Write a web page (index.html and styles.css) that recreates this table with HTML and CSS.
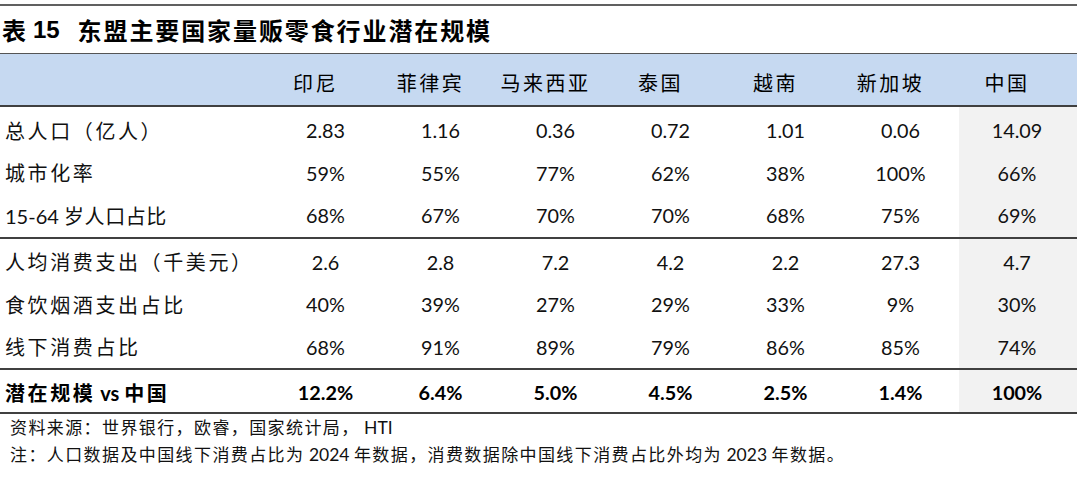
FILE: index.html
```html
<!DOCTYPE html>
<html lang="zh-CN">
<head>
<meta charset="utf-8">
<title>表 15 东盟主要国家量贩零食行业潜在规模</title>
<link rel="stylesheet" href="styles.css">
</head>
<body>
<div class="page">
  <div class="top-rule"></div>
  <h1 class="title"><span class="t-cjk">表</span><span class="t-num">15</span><span class="t-cjk">东盟主要国家量贩零食行业潜在规模</span></h1>

  <div class="table">
    <div class="row head">
      <div class="label"></div>
      <div class="cell">印尼</div>
      <div class="cell">菲律宾</div>
      <div class="cell">马来西亚</div>
      <div class="cell">泰国</div>
      <div class="cell">越南</div>
      <div class="cell">新加坡</div>
      <div class="cell">中国</div>
    </div>

    <div class="group">
      <div class="row">
        <div class="label">总人口（亿人）</div>
        <div class="cell">2.83</div><div class="cell">1.16</div><div class="cell">0.36</div><div class="cell">0.72</div><div class="cell">1.01</div><div class="cell">0.06</div><div class="cell">14.09</div>
      </div>
      <div class="row">
        <div class="label">城市化率</div>
        <div class="cell">59%</div><div class="cell">55%</div><div class="cell">77%</div><div class="cell">62%</div><div class="cell">38%</div><div class="cell">100%</div><div class="cell">66%</div>
      </div>
      <div class="row">
        <div class="label tight"><span class="lat">15-64 </span>岁人口占比</div>
        <div class="cell">68%</div><div class="cell">67%</div><div class="cell">70%</div><div class="cell">70%</div><div class="cell">68%</div><div class="cell">75%</div><div class="cell">69%</div>
      </div>
    </div>

    <div class="group">
      <div class="row">
        <div class="label">人均消费支出（千美元）</div>
        <div class="cell">2.6</div><div class="cell">2.8</div><div class="cell">7.2</div><div class="cell">4.2</div><div class="cell">2.2</div><div class="cell">27.3</div><div class="cell">4.7</div>
      </div>
      <div class="row">
        <div class="label">食饮烟酒支出占比</div>
        <div class="cell">40%</div><div class="cell">39%</div><div class="cell">27%</div><div class="cell">29%</div><div class="cell">33%</div><div class="cell">9%</div><div class="cell">30%</div>
      </div>
      <div class="row">
        <div class="label">线下消费占比</div>
        <div class="cell">68%</div><div class="cell">91%</div><div class="cell">89%</div><div class="cell">79%</div><div class="cell">86%</div><div class="cell">85%</div><div class="cell">74%</div>
      </div>
    </div>

    <div class="group total">
      <div class="row">
        <div class="label">潜在规模<span class="lat"> vs </span>中国</div>
        <div class="cell">12.2%</div><div class="cell">6.4%</div><div class="cell">5.0%</div><div class="cell">4.5%</div><div class="cell">2.5%</div><div class="cell">1.4%</div><div class="cell">100%</div>
      </div>
    </div>
  </div>

  <div class="notes">
    <p>资料来源：世界银行，欧睿，国家统计局，<span class="lat"> HTI</span></p>
    <p>注：人口数据及中国线下消费占比为<span class="lat"> 2024 </span>年数据，消费数据除中国线下消费占比外均为<span class="lat"> 2023 </span>年数据。</p>
  </div>
</div>
</body>
</html>
```

FILE: styles.css
```css
html, body {
  margin: 0;
  padding: 0;
  background: #ffffff;
}

body {
  font-family: "Lato", "Noto Sans CJK SC", sans-serif;
  color: #111111;
}

.page {
  width: 1080px;
}

.top-rule {
  margin-top: 4px;
  width: 1077px;
  border-top: 2px solid #606060;
}

.title {
  margin: 0;
  height: 47px;
  line-height: 47px;
  padding-left: 2px;
  font-size: 24px;
  font-weight: 700;
  color: #000000;
  white-space: nowrap;
  display: flex;
  align-items: center;
}

.t-cjk {
  font-family: "Noto Sans CJK SC", sans-serif;
  letter-spacing: 1.9px;
}

.t-num {
  font-family: "Liberation Sans", Arial, sans-serif;
  margin: 0 18px 0 5px;
}

.table {
  width: 1077px;
}

.row {
  display: grid;
  grid-template-columns: 268px repeat(6, 115px) 118px;
  align-items: center;
  height: 42.5px;
}

.label {
  padding-left: 5px;
  font-size: 20px;
  letter-spacing: 2.6px;
  white-space: nowrap;
}

.label.tight {
  letter-spacing: 0.6px;
}

.lat {
  letter-spacing: 0;
  font-size: 20px;
}

.cell {
  text-align: center;
  font-size: 19.8px;
  white-space: nowrap;
}

.head {
  height: 51px;
  background: #c6d9f1;
  border-top: 1px solid #555555;
  border-bottom: 2px solid #404040;
}

.head .cell {
  font-size: 20px;
  letter-spacing: 2.5px;
  padding-right: 20px;
  padding-top: 6px;
  color: #000000;
}

.group {
  padding-top: 2px;
  border-bottom: 2px solid #404040;
  background: linear-gradient(to right, transparent 959px, #f2f2f2 959px);
}

.total .row {
  height: 40px;
}

.total .label,
.total .cell {
  font-weight: 700;
  color: #000000;
}

.notes {
  padding-left: 10px;
  font-size: 17px;
  letter-spacing: 1.4px;
}

.notes .lat {
  font-size: 17.5px;
}

.notes p {
  margin: 0;
  line-height: 27px;
  white-space: nowrap;
}
```
